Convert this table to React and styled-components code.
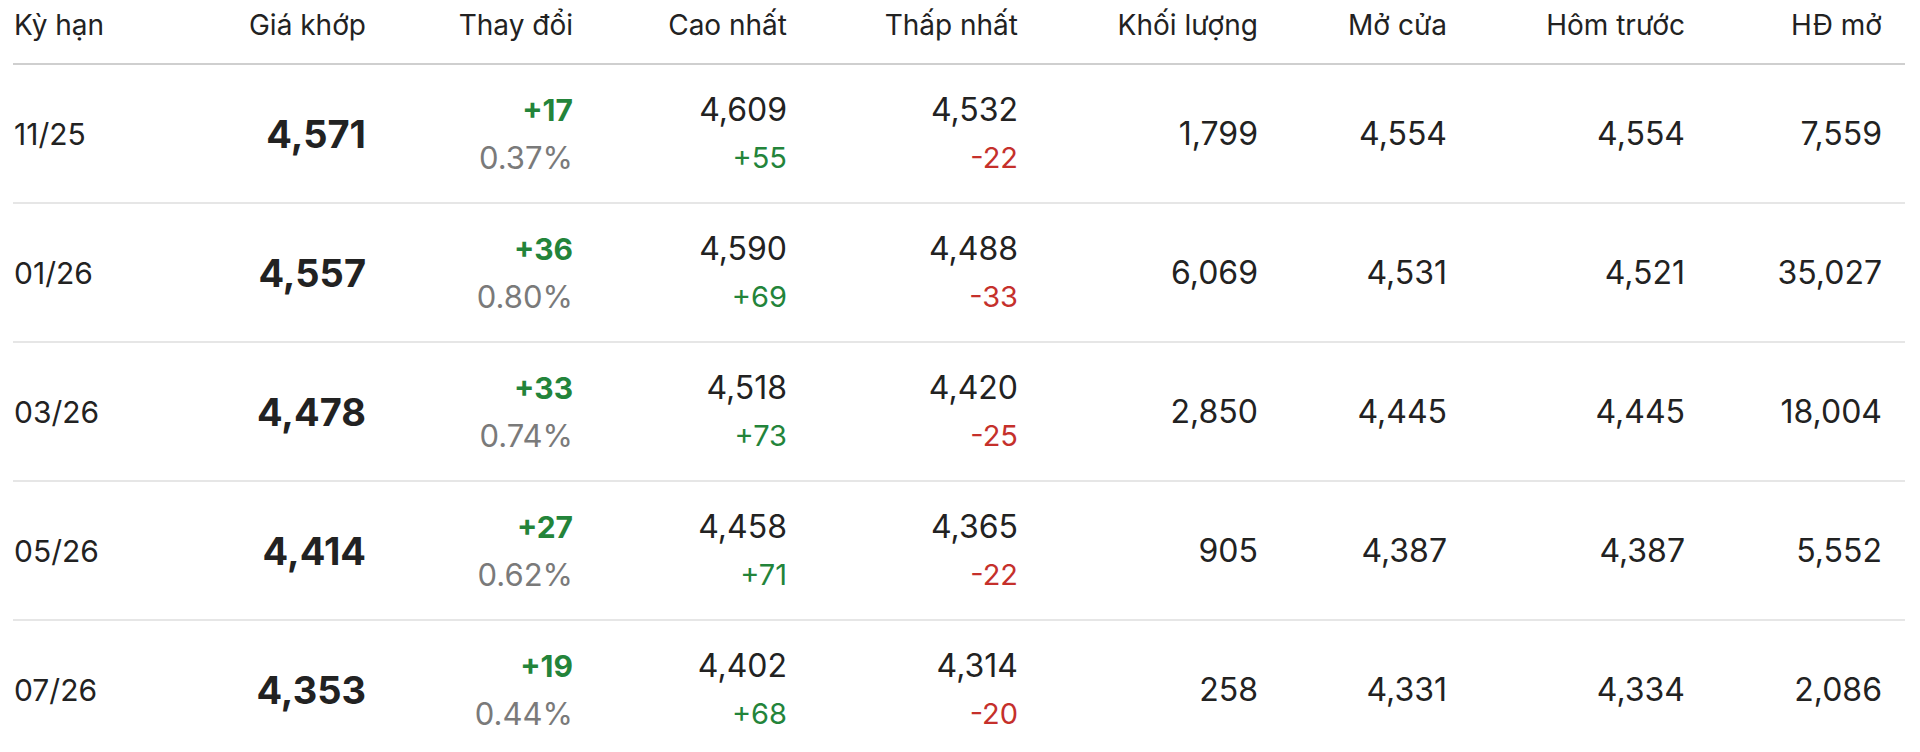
import React from 'react';
import styled, { createGlobalStyle } from 'styled-components';

const GlobalStyle = createGlobalStyle`
  html, body {
    margin: 0;
    padding: 0;
    background: #fff;
  }

  body {
    font-family: Inter, Roboto, "Noto Sans", sans-serif;
    color: #1f1f1f;
  }
`;

const COLUMNS = '187px 166px 207px 214px 231px 240px 189px 238px 220px';

const Table = styled.div`
  width: 1892px;
  margin-left: 13px;
`;

const HeaderRow = styled.div`
  display: grid;
  grid-template-columns: ${COLUMNS};
  align-items: center;
  height: 50px;
  padding-bottom: 13px;
  border-bottom: 2px solid #cfcfcf;
`;

const HeadCell = styled.div`
  font-size: 28px;
  font-weight: 400;
  color: #222;
  text-align: ${p => (p.left ? 'left' : 'right')};
  padding-left: ${p => (p.left ? '1px' : '0')};
  padding-right: ${p => (p.last ? '23px' : '0')};
  white-space: nowrap;
`;

const Row = styled.div`
  display: grid;
  grid-template-columns: ${COLUMNS};
  align-items: center;
  height: 137px;
  border-bottom: 2px solid #e6e6e6;
`;

const Cell = styled.div`
  display: flex;
  flex-direction: column;
  align-items: ${p => (p.left ? 'flex-start' : 'flex-end')};
  padding-left: ${p => (p.left ? '1px' : '0')};
  padding-right: ${p => (p.last ? '23px' : '0')};
  white-space: nowrap;
`;

const Term = styled.span`
  font-size: 30px;
  line-height: 48px;
  color: #222;
`;

const Price = styled.span`
  font-size: 38px;
  font-weight: 700;
  line-height: 48px;
  color: #222;
`;

const Value = styled.span`
  font-size: 32px;
  line-height: 48px;
  color: #222;
`;

const Change = styled.span`
  font-size: ${p => (p.tone ? (p.strong ? '30px' : '29px') : '31px')};
  line-height: 48px;
  font-weight: ${p => (p.strong ? 700 : 400)};
  color: ${p => (p.tone === 'up' ? '#23843a' : p.tone === 'down' ? '#c5302b' : '#7a7a7a')};
`;

const rows = [
  { term: '11/25', price: '4,571', chg: '+17', pct: '0.37%', high: '4,609', highChg: '+55', low: '4,532', lowChg: '-22', vol: '1,799', open: '4,554', prev: '4,554', oi: '7,559' },
  { term: '01/26', price: '4,557', chg: '+36', pct: '0.80%', high: '4,590', highChg: '+69', low: '4,488', lowChg: '-33', vol: '6,069', open: '4,531', prev: '4,521', oi: '35,027' },
  { term: '03/26', price: '4,478', chg: '+33', pct: '0.74%', high: '4,518', highChg: '+73', low: '4,420', lowChg: '-25', vol: '2,850', open: '4,445', prev: '4,445', oi: '18,004' },
  { term: '05/26', price: '4,414', chg: '+27', pct: '0.62%', high: '4,458', highChg: '+71', low: '4,365', lowChg: '-22', vol: '905', open: '4,387', prev: '4,387', oi: '5,552' },
  { term: '07/26', price: '4,353', chg: '+19', pct: '0.44%', high: '4,402', highChg: '+68', low: '4,314', lowChg: '-20', vol: '258', open: '4,331', prev: '4,334', oi: '2,086' },
];

const headers = ['Kỳ hạn', 'Giá khớp', 'Thay đổi', 'Cao nhất', 'Thấp nhất', 'Khối lượng', 'Mở cửa', 'Hôm trước', 'HĐ mở'];

const App = () => (
  <>
    <GlobalStyle />
    <Table>
      <HeaderRow>
        {headers.map((h, i) => (
          <HeadCell key={h} left={i === 0} last={i === headers.length - 1}>
            {h}
          </HeadCell>
        ))}
      </HeaderRow>
      {rows.map(r => (
        <Row key={r.term}>
          <Cell left>
            <Term>{r.term}</Term>
          </Cell>
          <Cell>
            <Price>{r.price}</Price>
          </Cell>
          <Cell>
            <Change strong tone="up">{r.chg}</Change>
            <Change>{r.pct}</Change>
          </Cell>
          <Cell>
            <Value>{r.high}</Value>
            <Change tone="up">{r.highChg}</Change>
          </Cell>
          <Cell>
            <Value>{r.low}</Value>
            <Change tone="down">{r.lowChg}</Change>
          </Cell>
          <Cell>
            <Value>{r.vol}</Value>
          </Cell>
          <Cell>
            <Value>{r.open}</Value>
          </Cell>
          <Cell>
            <Value>{r.prev}</Value>
          </Cell>
          <Cell last>
            <Value>{r.oi}</Value>
          </Cell>
        </Row>
      ))}
    </Table>
  </>
);

export default App;
